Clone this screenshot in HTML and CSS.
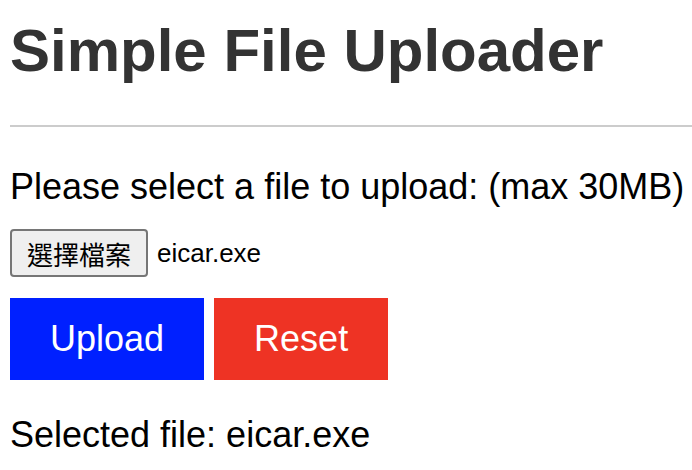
FILE: index.html
```html
<!DOCTYPE html>
<html lang="zh-Hant">
<head>
<meta charset="utf-8">
<title>Simple File Uploader</title>
<link rel="stylesheet" href="styles.css">
</head>
<body>
  <h1 class="title">Simple File Uploader</h1>
  <hr class="divider">
  <p class="prompt">Please select a file to upload: (max 30MB)</p>
  <div class="file-row">
    <span class="file-btn">選擇檔案</span>
    <span class="file-name">eicar.exe</span>
  </div>
  <div class="actions">
    <button class="btn btn-upload">Upload</button>
    <button class="btn btn-reset">Reset</button>
  </div>
  <p class="selected">Selected file: eicar.exe</p>
</body>
</html>
```
FILE: styles.css
```css
html, body {
  margin: 0;
  padding: 0;
  background: #fff;
}
body {
  padding-left: 10px;
  font-family: "Liberation Sans", Arial, sans-serif;
  color: #000;
}
.title {
  margin: 16px 0 0;
  font-size: 60px;
  line-height: 69px;
  font-weight: 700;
  color: #333;
}
.divider {
  margin: 40px 0 0;
  border: 0;
  height: 2px;
  background: #ccc;
}
.prompt {
  margin: 39px 0 0;
  font-size: 36px;
  line-height: 41px;
}
.file-row {
  margin-top: 22px;
  display: flex;
  align-items: center;
  gap: 9px;
}
.file-btn {
  box-sizing: border-box;
  height: 48px;
  width: 138px;
  display: flex;
  align-items: center;
  justify-content: center;
  border: 2px solid #767676;
  border-radius: 4px;
  background: #efefef;
  font-family: "Noto Sans CJK TC", "Liberation Sans", sans-serif;
  font-size: 26px;
  color: #000;
}
.file-name {
  font-size: 26px;
}
.actions {
  margin-top: 21px;
  display: flex;
  gap: 10px;
}
.btn {
  height: 82px;
  padding: 0 40px;
  border: 0;
  margin: 0;
  font-family: "Liberation Sans", Arial, sans-serif;
  font-size: 36px;
  color: #fff;
  cursor: pointer;
}
.btn-upload {
  background: #0020ff;
}
.btn-reset {
  background: #ee3324;
}
.selected {
  margin: 34px 0 0;
  font-size: 36px;
  line-height: 41px;
}
```
